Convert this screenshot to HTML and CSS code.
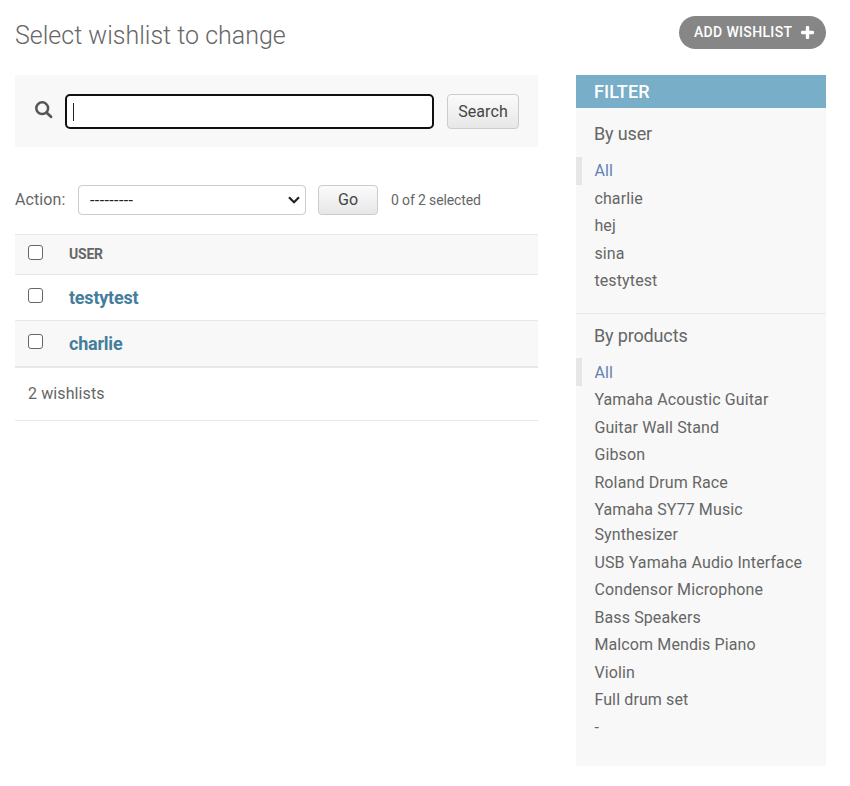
FILE: index.html
```html
<!DOCTYPE html>
<html lang="en">
<head>
<meta charset="utf-8">
<title>Select wishlist to change</title>
<link rel="stylesheet" href="styles.css">
</head>
<body>
<header class="head">
  <h1>Select wishlist to change</h1>
  <a class="add"><span>ADD WISHLIST</span><svg width="13" height="13" viewBox="0 0 13 13"><path d="M6.5 1.5v10M1.5 6.5h10" stroke="#fff" stroke-width="3.4" stroke-linecap="round"/></svg></a>
</header>
<div class="cols">
  <main>
    <form class="search">
      <svg class="glass" width="18" height="18" viewBox="0 0 18 18" fill="none" stroke="#555"><circle cx="7.2" cy="7.2" r="5.9" stroke-width="2.5"/><path d="M11.7 11.7l4.3 4.1" stroke-width="2.8" stroke-linecap="round"/></svg>
      <div class="field"><span class="caret"></span></div>
      <div class="btn find">Search</div>
    </form>
    <div class="actions">
      <span class="lbl">Action:</span>
      <div class="select"><span>---------</span><svg width="12" height="8" viewBox="0 0 12 8"><path d="M1 1.2l5 5 5-5" fill="none" stroke="#222" stroke-width="2.2"/></svg></div>
      <div class="btn go">Go</div>
      <span class="count">0 of 2 selected</span>
    </div>
    <div class="table">
      <div class="row th"><i class="box"></i><span>USER</span></div>
      <div class="row"><i class="box"></i><a>testytest</a></div>
      <div class="row alt"><i class="box"></i><a>charlie</a></div>
    </div>
    <p class="total">2 wishlists</p>
  </main>
  <aside>
    <h2>FILTER</h2>
    <h3>By user</h3>
    <ul>
      <li class="on">All</li><li>charlie</li><li>hej</li><li>sina</li><li>testytest</li>
    </ul>
    <h3 class="second">By products</h3>
    <ul>
      <li class="on">All</li><li>Yamaha Acoustic Guitar</li><li>Guitar Wall Stand</li><li>Gibson</li><li>Roland Drum Race</li><li>Yamaha SY77 Music Synthesizer</li><li>USB Yamaha Audio Interface</li><li>Condensor Microphone</li><li>Bass Speakers</li><li>Malcom Mendis Piano</li><li>Violin</li><li>Full drum set</li><li>-</li>
    </ul>
  </aside>
</div>
</body>
</html>
```
FILE: styles.css
```css
* { box-sizing: border-box; }
body { margin: 0; padding: 0 24px 0 15px; background: #fff; color: #666; font: 16px Roboto, sans-serif; }
.head { display: flex; justify-content: space-between; height: 75px; padding-top: 16px; }
h1 { margin: 0; font-size: 25px; font-weight: 300; line-height: 39px; }
.add { display: flex; align-items: center; gap: 9px; width: 147px; height: 33px; padding-left: 15px; border-radius: 17px; background: #868686; color: #fff; font-size: 14px; font-weight: 500; letter-spacing: .34px; white-space: nowrap; }
.add span { margin-top: -1px; }
.cols { display: flex; gap: 38px; align-items: flex-start; }
main { width: 523px; }
.search { display: flex; align-items: center; height: 72px; padding: 0 19px 0 20px; background: #f8f8f8; }
.glass { margin: -3px 0 0 0; }
.field { width: 369px; height: 35px; margin: 1px 13px 0 12px; padding: 7px 6px; border: 2px solid #101010; border-radius: 5px; background: #fff; }
.caret { display: block; width: 1px; height: 18px; background: #222; }
.btn { display: flex; align-items: center; justify-content: center; border: 1px solid #ccc; border-radius: 4px; background: linear-gradient(#fbfbfb, #e7e7e7); color: #444; }
.find { width: 72px; height: 35px; margin-top: 1px; letter-spacing: .1px; }
.actions { display: flex; align-items: center; height: 87px; padding-top: 19px; }
.lbl { width: 63px; margin-top: -2px; letter-spacing: .1px; }
.select { display: flex; align-items: center; justify-content: space-between; width: 228px; height: 30px; padding: 0 5px 0 11px; border: 1px solid #ccc; border-radius: 4px; color: #222; letter-spacing: .4px; }
.go { width: 60px; height: 30px; margin: 0 13px 0 12px; padding-bottom: 1px; }
.count { font-size: 14px; letter-spacing: -.13px; }
.row { display: flex; height: 46px; padding-left: 13px; border-bottom: 1px solid #e8e8e8; align-items: center; }
.row a { color: #447e9b; font-size: 18px; font-weight: 700; letter-spacing: -.22px; }
.th { height: 41px; border-top: 1px solid #e8e8e8; background: #f8f8f8; font-size: 14px; font-weight: 700; letter-spacing: -.2px; }
.th span { margin-top: -1px; }
.alt { background: #f8f8f8; }
.box { width: 15px; height: 15px; margin: -4px 26px 0 0; border: 1px solid #666; border-radius: 3px; background: #fff; }
.total { margin: 0; height: 54px; padding-left: 13px; border-top: 1px solid #e8e8e8; border-bottom: 1px solid #e8e8e8; line-height: 52px; letter-spacing: .1px; }
aside { width: 250px; height: 691px; background: #f8f8f8; }
h2 { margin: 0; height: 33px; padding-left: 18px; background: #79aec8; color: #fff; font-size: 18px; font-weight: 500; letter-spacing: .1px; line-height: 33px; }
h3 { margin: 0; height: 49px; padding: 13px 18px 0; font-size: 18px; font-weight: 400; line-height: 26px; letter-spacing: -.15px; }
.second { height: 45.35px; padding-top: 9px; border-top: 1px solid #e8e8e8; }
ul { margin: 0; padding: 0 0 18.5px; list-style: none; }
li { padding: 1.25px 10px 1.25px 18.4px; line-height: 25px; letter-spacing: .12px; }
.on { padding-left: 12.4px; border-left: 6px solid #e6e6e6; color: #6480b5; }
```
